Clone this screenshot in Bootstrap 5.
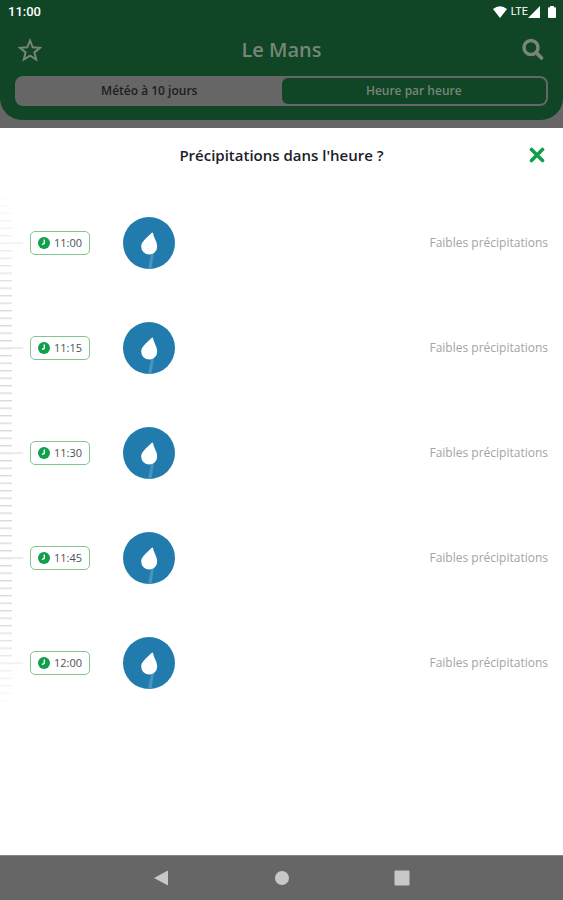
<!DOCTYPE html>
<html lang="fr">
<head>
<meta charset="utf-8">
<meta name="viewport" content="width=device-width, initial-scale=1">
<title>Le Mans – Précipitations dans l'heure</title>
<link href="https://cdn.jsdelivr.net/npm/bootstrap@5.3.0/dist/css/bootstrap.min.css" rel="stylesheet">
<style>
body{font-family:"Open Sans","Noto Sans",sans-serif;background:#666;line-height:1}
svg{display:block}
.top-area{background:#104525;border-radius:0 0 22px 22px;height:120px;margin-bottom:8px}
.status-row{height:24px;padding:0 7px 0 8px;font:500 13px/24px Roboto,sans-serif;color:#fff}
.network{font-size:11px;font-weight:400}
.title-row{height:52px;padding:0 18px}
.title-row h1{font-size:20px;font-weight:600;color:#77857a;line-height:24px}
.segments{height:30px;margin:0 15px;background:#666;border-radius:8px;padding:2px}
.segments button{border-radius:6px;font-size:12px;font-weight:600;line-height:16px;color:#1b1d1e}
.segments .chosen{background:#104525;color:#77857a}
.sheet-head{height:54px;padding:0 18px}
.sheet-head h2{font-size:15px;font-weight:600;line-height:20px;color:#19202b}
.timeline{margin-top:8px}
.hour-row{height:105px;padding:0 15px 0 6px}
.hour-chip{width:60px;height:24px;border:1px solid #82c58d;border-radius:5px;font-size:11px;color:#4d5056}
.drop{margin-left:33px}
.hint{font-size:12px;line-height:16px;color:#a2a4a6}
.system-nav{height:45px;border-top:1px solid #858585}
.system-nav .keys{width:256px}
</style>
<script src="https://cdn.jsdelivr.net/npm/bootstrap@5.3.0/dist/js/bootstrap.bundle.min.js"></script>
</head>
<body class="d-flex flex-column min-vh-100">
<svg width="0" height="0" class="position-absolute" aria-hidden="true">
  <symbol id="clock" viewBox="0 0 12 12"><circle cx="6" cy="6" r="6" fill="#10a04b"/><path d="M6.300 2.500V6.300L4 7.600" fill="none" stroke="#fff" stroke-width="1.400"/></symbol>
  <symbol id="rain" viewBox="0 0 52 52"><circle cx="26" cy="26" r="26" fill="#217bad"/><path d="M28 37L25 52H28.500L31 36Z" fill="#4794bd"/><path d="M29.500 15.500Q30 15.500 30.300 17C31 21 34.200 24.500 34.200 29.500A8 8 0 0 1 18.200 29.500C18.200 25 23 21.500 28 16.500Q29 15.500 29.500 15.500Z" fill="#fff"/></symbol>
</svg>

<header class="top-area">
  <div class="status-row d-flex align-items-center justify-content-between">
    <time>11:00</time>
    <div class="d-flex align-items-center">
      <svg width="14" height="12" viewBox="0 0 14 12"><path d="M0 3Q7-2.500 14 3L7 12Z" fill="#fff"/></svg>
      <span class="network ms-1">LTE</span>
      <svg width="12" height="12" viewBox="0 0 12 12"><path d="M12 0V12H0Z" fill="#fff"/></svg>
      <svg class="ms-2" width="8" height="12" viewBox="0 0 8 12"><path d="M2 0H6V1.200H7Q8 1.200 8 2.200V11Q8 12 7 12H1Q0 12 0 11V2.200Q0 1.200 1 1.200H2Z" fill="#fff"/></svg>
    </div>
  </div>
  <div class="title-row d-flex align-items-center justify-content-between">
    <button class="btn p-0 border-0" aria-label="Ajouter aux favoris"><svg width="24" height="24" viewBox="0 0 24 24"><path d="M12 2.500L14.700 9.300L22 9.800L16.400 14.400L18.200 21.500L12 17.600L5.800 21.500L7.600 14.400L2 9.800L9.300 9.300Z" fill="none" stroke="#77857a" stroke-width="2"/></svg></button>
    <h1 class="m-0">Le Mans</h1>
    <button class="btn p-0 border-0" aria-label="Rechercher"><svg width="24" height="24" viewBox="0 0 24 24"><circle cx="10" cy="9.500" r="7" fill="none" stroke="#77857a" stroke-width="3.500"/><path d="M15 14.500L20.500 20" stroke="#77857a" stroke-width="3.800" stroke-linecap="round"/></svg></button>
  </div>
  <div class="segments d-flex" role="group" aria-label="Période">
    <button class="btn border-0 p-0 flex-fill w-50">Météo à 10 jours</button>
    <button class="btn border-0 p-0 flex-fill w-50 chosen" aria-pressed="true">Heure par heure</button>
  </div>
</header>

<main class="flex-grow-1 bg-white">
  <div class="sheet-head d-flex align-items-center">
    <span class="col-1"></span>
    <h2 class="m-0 flex-grow-1 text-center">Précipitations dans l'heure ?</h2>
    <div class="col-1 d-flex justify-content-end"><button class="btn p-0 border-0" aria-label="Fermer"><svg width="16" height="16" viewBox="0 0 16 16"><path d="M2.500 2.500L13.500 13.500M13.500 2.500L2.500 13.500" stroke="#10a04b" stroke-width="3.600" stroke-linecap="round"/></svg></button></div>
  </div>
  <div class="timeline d-flex">
    <svg width="24" height="525" viewBox="0 0 24 525" aria-hidden="true">
      <defs>
        <pattern id="ticks" width="12" height="7.500" patternUnits="userSpaceOnUse"><path d="M0 .7H12" stroke="#dadada" stroke-width="1.400"/></pattern>
        <linearGradient id="fade" x2="0" y2="1"><stop offset="0" stop-color="#000"/><stop offset=".22" stop-color="#fff"/><stop offset=".8" stop-color="#fff"/><stop offset="1" stop-color="#000"/></linearGradient>
        <mask id="ends"><rect width="24" height="525" fill="url(#fade)"/></mask>
      </defs>
      <rect width="12" height="525" fill="url(#ticks)" mask="url(#ends)"/>
      <path d="M12 158H23M12 263H23M12 368H23" stroke="#dadada"/>
      <path d="M12 53H23M12 473H23" stroke="#e8e8e8"/>
    </svg>
    <ul class="list-unstyled flex-grow-1 m-0">
      <li class="hour-row d-flex align-items-center"><time class="hour-chip d-flex align-items-center justify-content-center gap-1"><svg width="12" height="12"><use href="#clock"/></svg>11:00</time><svg class="drop" width="52" height="52"><use href="#rain"/></svg><span class="hint ms-auto">Faibles précipitations</span></li>
      <li class="hour-row d-flex align-items-center"><time class="hour-chip d-flex align-items-center justify-content-center gap-1"><svg width="12" height="12"><use href="#clock"/></svg>11:15</time><svg class="drop" width="52" height="52"><use href="#rain"/></svg><span class="hint ms-auto">Faibles précipitations</span></li>
      <li class="hour-row d-flex align-items-center"><time class="hour-chip d-flex align-items-center justify-content-center gap-1"><svg width="12" height="12"><use href="#clock"/></svg>11:30</time><svg class="drop" width="52" height="52"><use href="#rain"/></svg><span class="hint ms-auto">Faibles précipitations</span></li>
      <li class="hour-row d-flex align-items-center"><time class="hour-chip d-flex align-items-center justify-content-center gap-1"><svg width="12" height="12"><use href="#clock"/></svg>11:45</time><svg class="drop" width="52" height="52"><use href="#rain"/></svg><span class="hint ms-auto">Faibles précipitations</span></li>
      <li class="hour-row d-flex align-items-center"><time class="hour-chip d-flex align-items-center justify-content-center gap-1"><svg width="12" height="12"><use href="#clock"/></svg>12:00</time><svg class="drop" width="52" height="52"><use href="#rain"/></svg><span class="hint ms-auto">Faibles précipitations</span></li>
    </ul>
  </div>
</main>

<nav class="system-nav d-flex justify-content-center align-items-center" aria-label="Navigation système">
  <div class="keys d-flex justify-content-between">
    <button class="btn p-0 border-0" aria-label="Retour"><svg width="16" height="16" viewBox="0 0 16 16"><path d="M14 .5V15.500L0 8Z" fill="#c8c8c8"/></svg></button>
    <button class="btn p-0 border-0" aria-label="Accueil"><svg width="16" height="16" viewBox="0 0 16 16"><circle cx="8" cy="8" r="7" fill="#c8c8c8"/></svg></button>
    <button class="btn p-0 border-0" aria-label="Applications récentes"><svg width="16" height="16" viewBox="0 0 16 16"><rect x=".5" y=".5" width="15" height="15" rx="1" fill="#c8c8c8"/></svg></button>
  </div>
</nav>
</body>
</html>
